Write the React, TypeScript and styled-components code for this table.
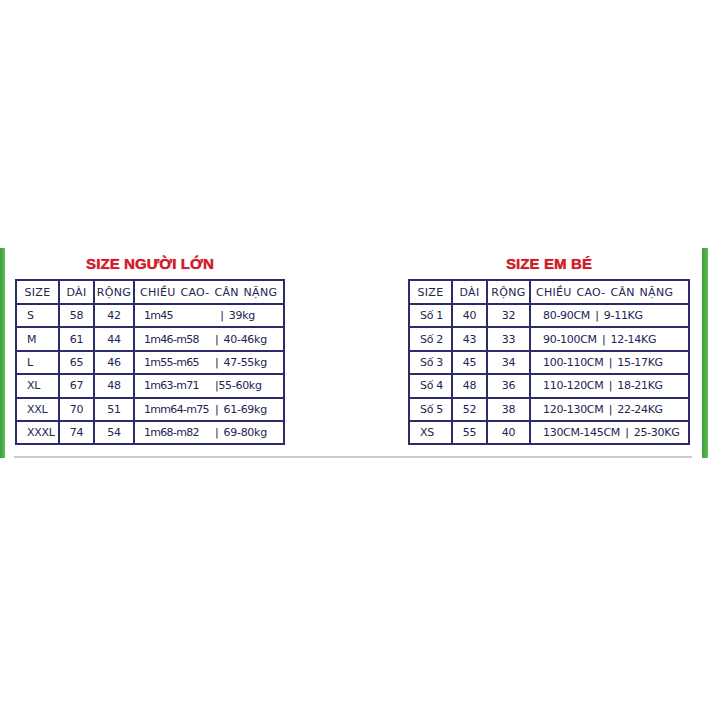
import React from 'react'
import styled, { createGlobalStyle } from 'styled-components'

const GlobalStyle = createGlobalStyle`
    html, body {
        margin: 0;
        padding: 0;
        background: #ffffff;
    }
    body {
        font-family: "DejaVu Sans", "Liberation Sans", sans-serif;
    }
`

const Page = styled.div`
    width: 708px;
    height: 708px;
    padding-top: 248px;
    box-sizing: border-box;
    background: #ffffff;
`

const Frame = styled.div`
    display: flex;
    height: 210px;
`

const GreenBar = styled.div<{ $w: number }>`
    width: ${p => p.$w}px;
    flex-shrink: 0;
    background: linear-gradient(to right, #3f9e3c, #5cbf56);
`

const Main = styled.div`
    flex: 1;
    display: flex;
    flex-direction: column;
    justify-content: space-between;
    padding: 7px 0 0;
`

const Charts = styled.div`
    display: flex;
    justify-content: space-between;
    padding: 0 12px 0 10px;
`

const Panel = styled.div`
    display: flex;
    flex-direction: column;
    align-items: center;
    gap: 6px;
`

const Title = styled.h2`
    margin: 0;
    font-family: "Liberation Sans", Arial, sans-serif;
    font-weight: 900;
    font-size: 15px;
    line-height: 18px;
    color: #cf1f2c;
    letter-spacing: 0.1px;
    text-shadow: 0 0 0.8px #cf1f2c;
`

const Table = styled.table`
    border-collapse: collapse;
    border: 2px solid #2b2b6c;
    color: #242452;
    font-size: 11px;
    table-layout: fixed;
`

const Cell = styled.td<{ $align?: 'left' | 'center'; $pad?: number; $tight?: boolean }>`
    border: 2px solid #2b2b6c;
    height: 21.4px;
    padding: 0 0 0 ${p => p.$pad ?? 0}px;
    text-align: ${p => p.$align ?? 'center'};
    white-space: nowrap;
    overflow: hidden;
    vertical-align: middle;
    letter-spacing: -0.3px;
    word-spacing: ${p => (p.$tight ? 0 : 2)}px;
`

const HeadCell = styled(Cell)`
    height: 22px;
    letter-spacing: 0.3px;
    word-spacing: 1px;
`

const Height = styled.span`
    display: inline-block;
    width: 71px;
    letter-spacing: -0.7px;
`

const Divider = styled.div`
    height: 2px;
    margin: 0 10px 0 9px;
    background: #c7cad2;
`

type Row = [string, string, string, string, string?]

const adult: Row[] = [
    ['S', '58', '42', '1m45', '\u00a0|\u00a039kg'],
    ['M', '61', '44', '1m46-m58', '| 40-46kg'],
    ['L', '65', '46', '1m55-m65', '| 47-55kg'],
    ['XL', '67', '48', '1m63-m71', '|55-60kg'],
    ['XXL', '70', '51', '1mm64-m75', '| 61-69kg'],
    ['XXXL', '74', '54', '1m68-m82', '| 69-80kg'],
]

const kids: Row[] = [
    ['Số 1', '40', '32', '80-90CM | 9-11KG'],
    ['Số 2', '43', '33', '90-100CM | 12-14KG'],
    ['Số 3', '45', '34', '100-110CM | 15-17KG'],
    ['Số 4', '48', '36', '110-120CM | 18-21KG'],
    ['Số 5', '52', '38', '120-130CM | 22-24KG'],
    ['XS', '55', '40', '130CM-145CM | 25-30KG'],
]

type ChartProps = {
    title: string
    rows: Row[]
    widths: number[]
    detailPad: number
}

const SizeChart = ({ title, rows, widths, detailPad }: ChartProps) => (
    <Panel>
        <Title>{title}</Title>
        <Table>
            <colgroup>
                {widths.map((w, i) => <col key={i} style={{ width: w }} />)}
            </colgroup>
            <thead>
                <tr>
                    <HeadCell>SIZE</HeadCell>
                    <HeadCell>DÀI</HeadCell>
                    <HeadCell>RỘNG</HeadCell>
                    <HeadCell $align="left" $pad={5}>CHIỀU CAO- CÂN NẶNG</HeadCell>
                </tr>
            </thead>
            <tbody>
                {rows.map(row => (
                    <tr key={row[0]}>
                        <Cell $align="left" $pad={10} $tight>{row[0]}</Cell>
                        <Cell>{row[1]}</Cell>
                        <Cell>{row[2]}</Cell>
                        <Cell $align="left" $pad={detailPad}>
                            {row[4] ? <><Height>{row[3]}</Height>{row[4]}</> : row[3]}
                        </Cell>
                    </tr>
                ))}
            </tbody>
        </Table>
    </Panel>
)

const App = () => (
    <Page>
        <GlobalStyle />
        <Frame>
            <GreenBar $w={5} />
            <Main>
                <Charts>
                    <SizeChart title="SIZE NGƯỜI LỚN" rows={adult} widths={[43, 35, 40, 150]} detailPad={9} />
                    <SizeChart title="SIZE EM BÉ" rows={kids} widths={[43, 35, 43, 159]} detailPad={12} />
                </Charts>
                <Divider />
            </Main>
            <GreenBar $w={6} />
        </Frame>
    </Page>
)

export default App
